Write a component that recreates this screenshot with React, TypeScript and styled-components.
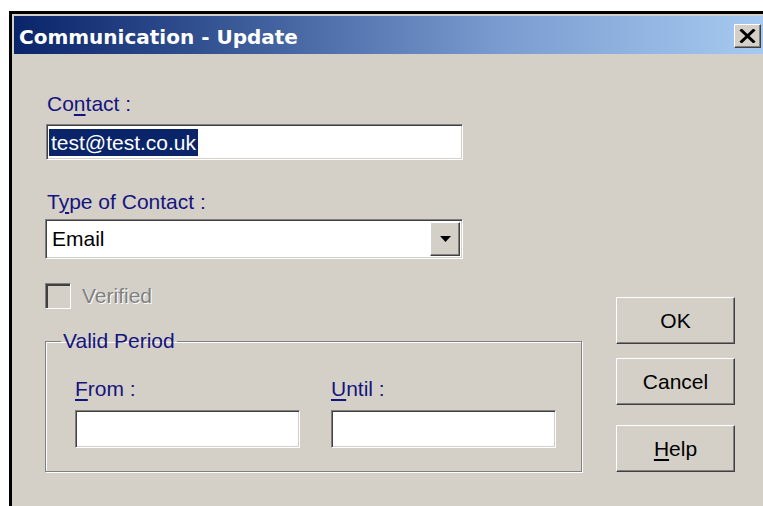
import styled, {createGlobalStyle} from 'styled-components'

const GlobalStyle = createGlobalStyle`
  html, body {
    margin: 0;
    padding: 0;
    background: #ffffff;
    overflow: hidden;
  }
  body {
    font-family: 'Liberation Sans', Arial, sans-serif;
  }
`

const Page = styled.div`
  width: 763px;
  height: 506px;
  padding: 11px 0 0 9px;
  box-sizing: border-box;
  overflow: hidden;
`

const Window = styled.div`
  width: 760px;
  height: 520px;
  box-sizing: border-box;
  border: 3px solid #000000;
  padding: 2px;
  background: #d4d0c8;
  display: flex;
  flex-direction: column;
`

const TitleBar = styled.div`
  height: 38px;
  flex-shrink: 0;
  display: flex;
  align-items: center;
  justify-content: space-between;
  padding: 3px 3px 0 5px;
  box-sizing: border-box;
  background: linear-gradient(to right, #0a246a 0%, #3a5a98 30%, #7a9cd0 65%, #a6caf0 100%);
`

const Title = styled.span`
  font-family: 'DejaVu Sans', Tahoma, sans-serif;
  font-weight: bold;
  font-size: 20px;
  color: #ffffff;
  white-space: nowrap;
`

const raised = `
  background: #d4d0c8;
  border: 1px solid;
  border-color: #ffffff #404040 #404040 #ffffff;
  box-shadow: inset -1px -1px 0 #808080, inset 1px 1px 0 #d4d0c8;
  box-sizing: border-box;
`

const sunken = `
  background: #ffffff;
  border: 1px solid;
  border-color: #808080 #ffffff #ffffff #808080;
  box-shadow: inset 1px 1px 0 #404040, inset -1px -1px 0 #d4d0c8;
  box-sizing: border-box;
`

const CloseButton = styled.div`
  ${raised}
  width: 27px;
  height: 24px;
  margin-top: -2px;
  display: flex;
  align-items: center;
  justify-content: center;
`

const Body = styled.div`
  display: flex;
  padding: 38px 0 0 31px;
  font-size: 21px;
  line-height: 24px;
`

const FormColumn = styled.div`
  width: 538px;
  display: flex;
  flex-direction: column;
`

const Label = styled.div<{$gap?: number}>`
  color: #14147e;
  margin-left: 2px;
  margin-top: ${p => p.$gap ?? 0}px;
  height: 24px;
  white-space: nowrap;
`

const Key = styled.span`
  text-decoration: underline;
  text-underline-offset: 3px;
`

const TextField = styled.div<{$width: number; $height: number; $gap: number}>`
  ${sunken}
  width: ${p => p.$width}px;
  height: ${p => p.$height}px;
  margin-top: ${p => p.$gap}px;
  margin-left: 1px;
  display: flex;
  align-items: center;
  padding-left: 2px;
`

const Selected = styled.span`
  background: #0a246a;
  color: #ffffff;
  padding: 0 2px;
  line-height: 27px;
`

const Select = styled.div`
  ${sunken}
  width: 418px;
  height: 40px;
  margin-top: 5px;
  display: flex;
  align-items: center;
  justify-content: space-between;
  padding: 2px 2px 2px 6px;
  color: #000000;
`

const DropButton = styled.div`
  ${raised}
  width: 30px;
  height: 100%;
  display: flex;
  align-items: center;
  justify-content: center;
`

const CheckRow = styled.div`
  display: flex;
  align-items: center;
  gap: 11px;
  height: 26px;
  margin-top: 24px;
`

const CheckBox = styled.div`
  ${sunken}
  width: 26px;
  height: 26px;
  background: #d4d0c8;
  box-shadow: inset 2px 2px 0 #404040, inset -1px -1px 0 #d4d0c8;
`

const DisabledText = styled.span`
  color: #808080;
  text-shadow: 1px 1px 0 #ffffff;
`

const GroupBox = styled.fieldset`
  width: 537px;
  box-sizing: border-box;
  margin: 20px 0 0 0;
  padding: 24px 0 23px 29px;
  border: 1px solid #808080;
  box-shadow: inset 1px 1px 0 #ffffff, 1px 1px 0 #ffffff;
  min-inline-size: 0;
`

const Legend = styled.legend`
  color: #14147e;
  padding: 0 2px;
  margin-left: -14px;
  line-height: 24px;
`

const PeriodGrid = styled.div`
  display: grid;
  grid-template-columns: 225px 225px;
  column-gap: 31px;
`

const PeriodField = styled.div`
  display: flex;
  flex-direction: column;
`

const PeriodLabel = styled.div`
  color: #14147e;
  height: 24px;
`

const PeriodInput = styled.div`
  ${sunken}
  height: 38px;
  margin-top: 9px;
`

const ButtonColumn = styled.div`
  display: flex;
  flex-direction: column;
  margin: 205px 0 0 33px;
`

const DialogButton = styled.div<{$gap?: number}>`
  ${raised}
  width: 119px;
  height: 47px;
  margin-top: ${p => p.$gap ?? 0}px;
  display: flex;
  align-items: center;
  justify-content: center;
  color: #000000;
`

export default function App() {
  return (
    <Page>
      <GlobalStyle />
      <Window>
        <TitleBar>
          <Title>Communication - Update</Title>
          <CloseButton>
            <svg width="17" height="14" viewBox="0 0 17 14">
              <path d="M1.5 0.5 L15.5 13.5 M15.5 0.5 L1.5 13.5" stroke="#000" strokeWidth="3" />
            </svg>
          </CloseButton>
        </TitleBar>
        <Body>
          <FormColumn>
            <Label>
              Co<Key>n</Key>tact :
            </Label>
            <TextField $width={417} $height={36} $gap={8}>
              <Selected>test@test.co.uk</Selected>
            </TextField>
            <Label $gap={30}>
              T<Key>y</Key>pe of Contact :
            </Label>
            <Select>
              <span>Email</span>
              <DropButton>
                <svg width="11" height="6" viewBox="0 0 11 6">
                  <path d="M0 0 H11 L5.5 6 Z" fill="#000" />
                </svg>
              </DropButton>
            </Select>
            <CheckRow>
              <CheckBox />
              <DisabledText>Verified</DisabledText>
            </CheckRow>
            <GroupBox>
              <Legend>Valid Period</Legend>
              <PeriodGrid>
                <PeriodField>
                  <PeriodLabel>
                    <Key>F</Key>rom :
                  </PeriodLabel>
                  <PeriodInput />
                </PeriodField>
                <PeriodField>
                  <PeriodLabel>
                    <Key>U</Key>ntil :
                  </PeriodLabel>
                  <PeriodInput />
                </PeriodField>
              </PeriodGrid>
            </GroupBox>
          </FormColumn>
          <ButtonColumn>
            <DialogButton>OK</DialogButton>
            <DialogButton $gap={14}>Cancel</DialogButton>
            <DialogButton $gap={20}>
              <span>
                <Key>H</Key>elp
              </span>
            </DialogButton>
          </ButtonColumn>
        </Body>
      </Window>
    </Page>
  )
}
